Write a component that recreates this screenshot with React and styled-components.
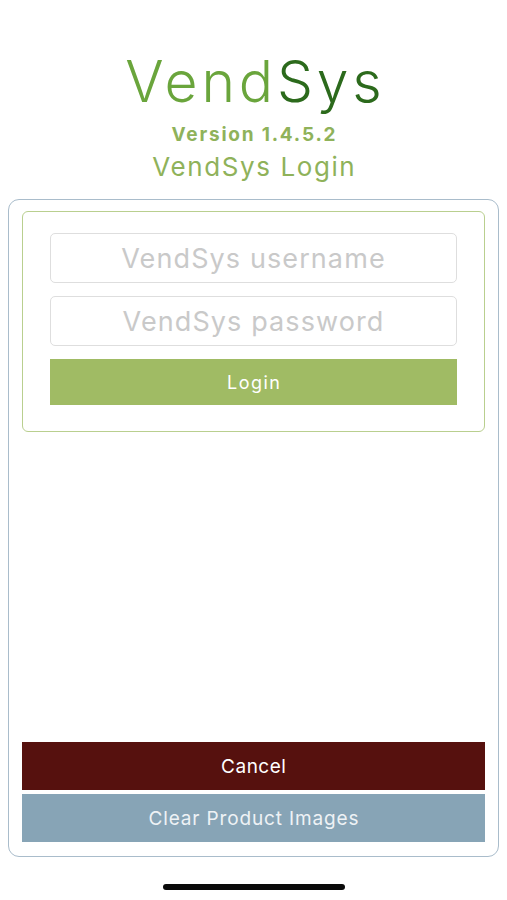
import React from "react";
import styled, { createGlobalStyle } from "styled-components";

const Global = createGlobalStyle`
  html, body { margin: 0; padding: 0; background: #ffffff; }
  body { font-family: Inter, "Liberation Sans", Arial, sans-serif; }
  * { box-sizing: border-box; }
`;

const Screen = styled.div`
  width: 507px;
  height: 900px;
  display: flex;
  flex-direction: column;
  align-items: stretch;
  background: #fff;
`;

const Header = styled.header`
  display: flex;
  flex-direction: column;
  align-items: center;
  padding-top: 52px;
  height: 199px;
`;

const Title = styled.h1`
  margin: 0;
  font-family: Inter, "Liberation Sans", sans-serif;
  font-weight: 300;
  font-size: 57px;
  line-height: 60px;
  letter-spacing: 3.8px;
  padding-left: 3.8px;
`;

const TitlePart = styled.span`
  color: ${(p) => p.$color};
`;

const Version = styled.div`
  font-weight: 700;
  font-size: 19px;
  line-height: 22px;
  letter-spacing: 1.8px;
  padding-left: 1.8px;
  color: #8fb25a;
  margin-top: 12px;
`;

const Subtitle = styled.div`
  font-size: 26px;
  line-height: 30px;
  letter-spacing: 1.6px;
  padding-left: 1.6px;
  color: #8fb25a;
  margin-top: 6px;
`;

const Panel = styled.main`
  margin: 0 8px;
  height: 658px;
  border: 1px solid #a9bccb;
  border-radius: 11px;
  display: flex;
  flex-direction: column;
  padding: 11px 13px 14px;
`;

const LoginBox = styled.section`
  border: 1px solid #b9cf8f;
  border-radius: 6px;
  padding: 21px 27px 26px;
  display: flex;
  flex-direction: column;
`;

const Field = styled.input`
  height: 50px;
  width: 100%;
  border: 1px solid #dedede;
  border-radius: 5px;
  background: #fff;
  font-family: Inter, "Liberation Sans", Arial, sans-serif;
  font-size: 27px;
  letter-spacing: 1.1px;
  text-align: center;
  color: #333;
  outline: none;
  margin-bottom: ${(p) => p.$gap}px;
  &::placeholder { color: #c9c9c9; }
`;

const Button = styled.button`
  display: flex;
  align-items: center;
  justify-content: center;
  width: 100%;
  height: ${(p) => p.$h}px;
  border: none;
  border-radius: 0;
  background: ${(p) => p.$bg};
  color: ${(p) => p.$fg};
  font-family: Inter, "Liberation Sans", Arial, sans-serif;
  font-size: ${(p) => p.$size}px;
  letter-spacing: ${(p) => p.$ls}px;
  padding: 0 0 0 ${(p) => p.$ls}px;
  margin-top: ${(p) => p.$mt || 0}px;
`;

const Spacer = styled.div`
  flex: 1;
`;

const HomeBar = styled.div`
  width: 182px;
  height: 6px;
  border-radius: 3px;
  background: #0a0a0a;
  margin: 27px auto 0;
`;

export default function App() {
  return (
    <Screen>
      <Global />
      <Header>
        <Title>
          <TitlePart $color="#6aa53c">Vend</TitlePart>
          <TitlePart $color="#2c6a1c">Sys</TitlePart>
        </Title>
        <Version>Version 1.4.5.2</Version>
        <Subtitle>VendSys Login</Subtitle>
      </Header>
      <Panel>
        <LoginBox>
          <Field placeholder="VendSys username" $gap={13} />
          <Field type="password" placeholder="VendSys password" $gap={13} />
          <Button $h={46} $bg="#a0bb64" $fg="#ffffff" $size={18} $ls={1.5}>Login</Button>
        </LoginBox>
        <Spacer />
        <Button $h={48} $bg="#56110e" $fg="#ffffff" $size={19} $ls={0.5}>Cancel</Button>
        <Button $h={48} $bg="#87a4b6" $fg="#eef2f5" $size={19} $ls={0.85} $mt={4}>Clear Product Images</Button>
      </Panel>
      <HomeBar />
    </Screen>
  );
}
